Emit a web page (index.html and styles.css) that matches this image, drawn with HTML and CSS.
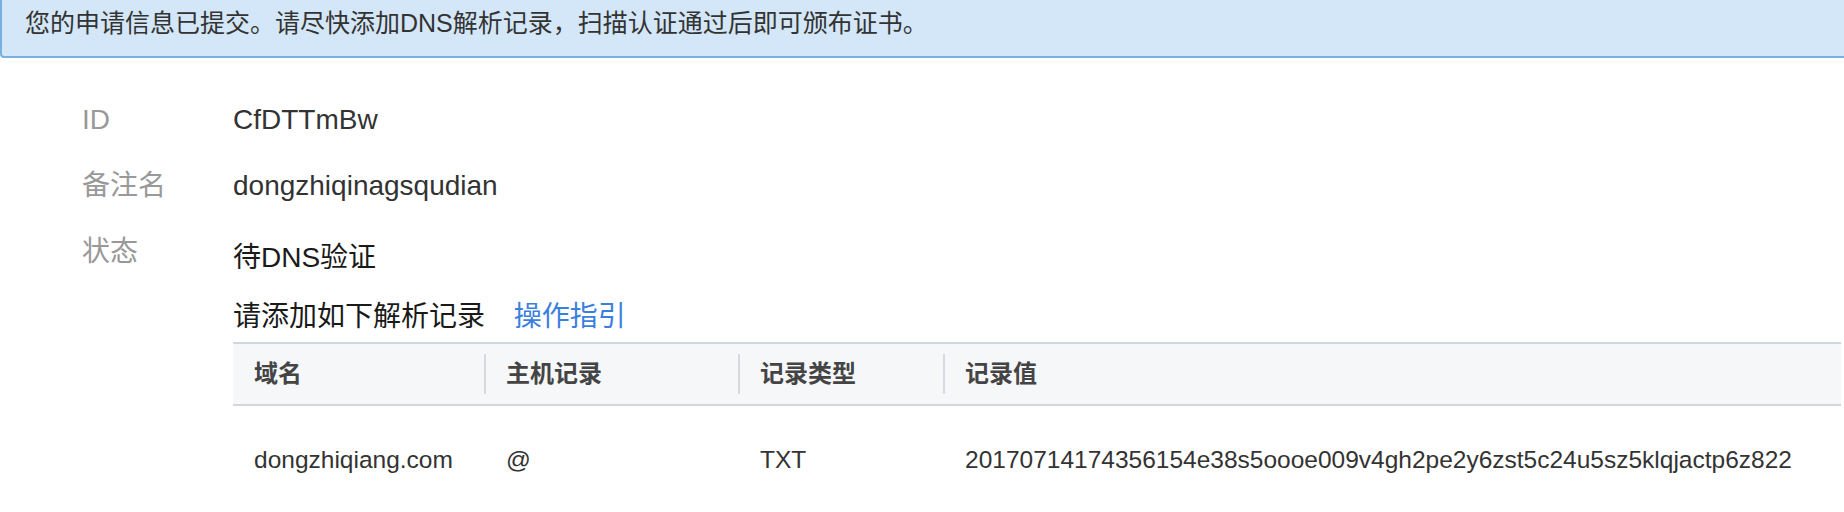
FILE: index.html
```html
<!DOCTYPE html>
<html lang="zh-CN">
<head>
    <meta charset="UTF-8">
    <meta name="viewport" content="width=device-width, initial-scale=1.0">
    <title>证书申请</title>
    <link rel="stylesheet" href="styles.css">
</head>
<body>
    <div class="notice">您的申请信息已提交。请尽快添加DNS解析记录，扫描认证通过后即可颁布证书。</div>

    <div class="detail">
        <div class="row">
            <div class="label">ID</div>
            <div class="value">CfDTTmBw</div>
        </div>
        <div class="row">
            <div class="label">备注名</div>
            <div class="value">dongzhiqinagsqudian</div>
        </div>
        <div class="row">
            <div class="label">状态</div>
            <div class="value status">
                <p class="status-text">待DNS验证</p>
                <p class="hint">请添加如下解析记录 <a href="#" class="guide">操作指引</a></p>
                <table class="records">
                    <thead>
                        <tr>
                            <th class="col-domain">域名</th>
                            <th class="col-host">主机记录</th>
                            <th class="col-type">记录类型</th>
                            <th>记录值</th>
                        </tr>
                    </thead>
                    <tbody>
                        <tr>
                            <td>dongzhiqiang.com</td>
                            <td>@</td>
                            <td>TXT</td>
                            <td>20170714174356154e38s5oooe009v4gh2pe2y6zst5c24u5sz5klqjactp6z822</td>
                        </tr>
                    </tbody>
                </table>
            </div>
        </div>
    </div>
</body>
</html>
```

FILE: styles.css
```css
* {
    margin: 0;
    padding: 0;
    box-sizing: border-box;
    font-family: "Liberation Sans", "Noto Sans CJK SC", sans-serif;
}
body {
    background: #ffffff;
    color: #333;
}
.notice {
    height: 58px;
    padding: 9px 23px 0;
    font-size: 25px;
    line-height: 28px;
    color: #333;
    background: #d3e7f8;
    border-left: 2px solid #78b1e1;
    border-bottom: 2px solid #78b1e1;
    border-bottom-left-radius: 4px;
}
.detail {
    padding: 42px 3px 0 82px;
}
.row {
    display: flex;
    margin-bottom: 26px;
    font-size: 28px;
    line-height: 40px;
}
.label {
    width: 151px;
    flex-shrink: 0;
    color: #999;
}
.value {
    flex: 1;
    color: #333;
}
.status {
    padding-top: 6px;
}
.status-text {
    color: #1a1a1a;
}
.hint {
    margin-top: 19px;
    color: #1a1a1a;
}
.guide {
    margin-left: 21px;
    color: #3b7fde;
    text-decoration: none;
}
.records {
    width: 100%;
    margin-top: 5px;
    border-collapse: collapse;
    font-size: 24px;
}
.records th {
    position: relative;
    height: 62px;
    padding-left: 22px;
    text-align: left;
    font-weight: bold;
    color: #444;
    background: #f6f7f9;
    border-top: 2px solid #d2d6de;
    border-bottom: 2px solid #d2d6de;
}
.records th:first-child {
    padding-left: 21px;
}
.records th + th::before {
    content: "";
    position: absolute;
    left: 0;
    top: 10px;
    bottom: 10px;
    width: 2px;
    background: #d6d9df;
}
.col-domain {
    width: 251px;
}
.col-host {
    width: 254px;
}
.col-type {
    width: 205px;
}
.records td {
    padding: 38px 0 30px 22px;
    font-size: 24.5px;
    line-height: 32px;
    color: #333;
}
.records td:first-child {
    padding-left: 21px;
}
```
